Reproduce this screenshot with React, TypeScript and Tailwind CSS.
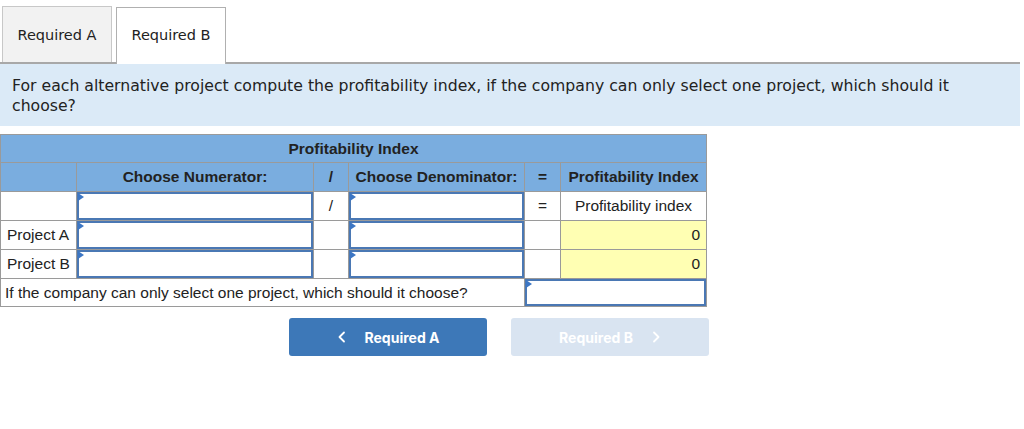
import React from 'react';

const tableFont = { fontFamily: '"Liberation Sans", Arial, sans-serif' };

/* small blue marker on the top-left of an answer box */
const InputBox: React.FC = () => (
    <div className="relative h-full w-full border-2 border-[#4a78b4] bg-white">
        <span className="absolute -left-[1px] -top-[1px] w-0 h-0 border-t-[4px] border-b-[4px] border-l-[6px] border-t-transparent border-b-transparent border-l-[#3c76c4]" />
    </div>
);

const App: React.FC = () => {
    return (
        <div className="w-[1024px] h-[429px] bg-white text-[#222] overflow-hidden">
            {/* Tabs */}
            <div className="w-[1020px] flex items-end gap-[4px] pt-[6px] pl-[2px] border-b-2 border-[#a8a8a8] font-['DejaVu_Sans',Verdana,sans-serif] text-[14.5px]">
                <div className="w-[110px] h-[56px] pt-[2px] flex items-center justify-center bg-[#f2f2f2] border border-b-0 border-[#c8c8c8] text-[#222]">
                    Required A
                </div>
                <div className="w-[110px] h-[57px] -mb-[2px] flex items-center justify-center bg-white border border-b-0 border-[#b0b0b0] text-[#222]">
                    Required B
                </div>
            </div>

            {/* Instruction panel */}
            <div className="w-[1020px] h-[62px] bg-[#dbeaf7] px-[12px] pt-[12px] font-['DejaVu_Sans',Verdana,sans-serif] text-[15.7px] leading-[20px] text-[#222]">
                <p className="w-[970px]">
                    For each alternative project compute the profitability index, if the company can only select one project, which should it choose?
                </p>
            </div>

            {/* Table */}
            <table className="mt-[8px] table-fixed border-collapse w-[706px] text-[15.5px] text-[#222]" style={tableFont}>
                <colgroup>
                    <col className="w-[76px]" />
                    <col className="w-[237px]" />
                    <col className="w-[35px]" />
                    <col className="w-[176px]" />
                    <col className="w-[36px]" />
                    <col className="w-[146px]" />
                </colgroup>
                <tbody>
                    <tr className="h-[28px] bg-[#7aaddf]">
                        <td colSpan={6} className="border border-[#9a9a9a] text-center font-bold p-0">Profitability Index</td>
                    </tr>
                    <tr className="h-[29px] bg-[#7aaddf] font-bold">
                        <td className="border border-[#9a9a9a] p-0"></td>
                        <td className="border border-[#9a9a9a] p-0 text-center">Choose Numerator:</td>
                        <td className="border border-[#9a9a9a] p-0 text-center">/</td>
                        <td className="border border-[#9a9a9a] p-0 text-center">Choose Denominator:</td>
                        <td className="border border-[#9a9a9a] p-0 text-center">=</td>
                        <td className="border border-[#9a9a9a] p-0 text-center">Profitability Index</td>
                    </tr>
                    <tr className="h-[29px]">
                        <td className="border border-[#9a9a9a] p-0"></td>
                        <td className="border border-[#9a9a9a] p-0 h-[29px]"><InputBox /></td>
                        <td className="border border-[#9a9a9a] p-0 text-center">/</td>
                        <td className="border border-[#9a9a9a] p-0 h-[29px]"><InputBox /></td>
                        <td className="border border-[#9a9a9a] p-0 text-center">=</td>
                        <td className="border border-[#9a9a9a] p-0 text-center">Profitability index</td>
                    </tr>
                    {['Project A', 'Project B'].map((name) => (
                        <tr key={name} className="h-[29px]">
                            <td className="border border-[#9a9a9a] p-0 pl-[6px] whitespace-nowrap">{name}</td>
                            <td className="border border-[#9a9a9a] p-0 h-[29px]"><InputBox /></td>
                            <td className="border border-[#9a9a9a] p-0"></td>
                            <td className="border border-[#9a9a9a] p-0 h-[29px]"><InputBox /></td>
                            <td className="border border-[#9a9a9a] p-0"></td>
                            <td className="border border-[#9a9a9a] p-0 pr-[6px] text-right bg-[#ffffb3]">0</td>
                        </tr>
                    ))}
                    <tr className="h-[28px]">
                        <td colSpan={4} className="border border-[#9a9a9a] p-0 pl-[4px] whitespace-nowrap">
                            If the company can only select one project, which should it choose?
                        </td>
                        <td colSpan={2} className="border border-[#9a9a9a] p-0 h-[28px]"><InputBox /></td>
                    </tr>
                </tbody>
            </table>

            {/* Navigation buttons */}
            <div className="mt-[11px] pl-[289px] flex gap-[24px] font-['Inter',sans-serif] text-[14px] font-bold">
                <button className="w-[198px] h-[38px] rounded-[3px] bg-[#3d78b8] text-white flex items-center justify-center gap-[18px]">
                    <svg width="10" height="12" viewBox="0 0 10 12" fill="none" stroke="currentColor" strokeWidth="1.8" strokeLinecap="round" strokeLinejoin="round">
                        <path d="M7 1.5L2.5 6L7 10.5" />
                    </svg>
                    <span>Required A</span>
                </button>
                <button className="w-[198px] h-[38px] rounded-[3px] bg-[#d9e4f1] text-white flex items-center justify-center gap-[18px]">
                    <span>Required B</span>
                    <svg width="10" height="12" viewBox="0 0 10 12" fill="none" stroke="currentColor" strokeWidth="1.8" strokeLinecap="round" strokeLinejoin="round">
                        <path d="M3 1.5L7.5 6L3 10.5" />
                    </svg>
                </button>
            </div>
        </div>
    );
};

export default App;
